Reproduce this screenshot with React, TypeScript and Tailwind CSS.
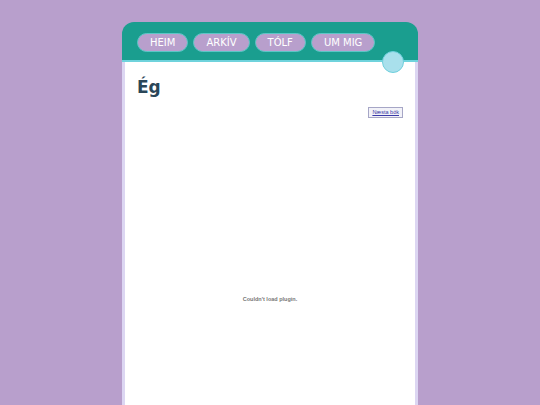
import React from 'react';

const navItems = ['HEIM', 'ARKÍV', 'TÓLF', 'UM MIG'];

export default function App() {
  return (
    <div className="min-h-[405px] h-[405px] overflow-hidden bg-[#b89fcc] pt-[22px] font-['DejaVu_Sans',Verdana,sans-serif]">
      <div className="mx-auto w-[296px]">
        {/* Header */}
        <div className="relative h-[40px] rounded-t-[12px] bg-[#1a9e8f] border-b-2 border-[#6fd3dc] pl-[15px] pt-[11px]">
          <nav className="flex gap-[5px]">
            {navItems.map((item) => (
              <span
                key={item}
                className="h-[19px] flex items-center rounded-full bg-[#b89fcc] border border-[#5cc6c6] px-[12px] text-[10px] leading-none text-white"
              >
                {item}
              </span>
            ))}
          </nav>
          <div className="absolute right-[14px] top-[29px] h-[22px] w-[22px] rounded-full bg-[#a9e0ec] border border-[#6fcfdc]" />
        </div>

        {/* Body */}
        <div className="h-[400px] bg-white border-x-[3px] border-[#dcd6f2] px-[12px] pt-[17px]">
          <h1 className="text-[17px] font-bold leading-none text-[#2a4658]">Ég</h1>
          <div className="mt-[11px] flex justify-end">
            <span className="h-[11px] flex items-center border border-[#a6a6c6] bg-[#f2f2f8] px-[3px] text-[5.5px] leading-none text-[#3a3aa8] underline font-['Liberation_Sans',Arial,sans-serif]">
              Næsta bók
            </span>
          </div>
          <div className="mt-[177px] text-center text-[5.5px] font-bold text-[#777] font-['Liberation_Sans',Arial,sans-serif]">
            Couldn't load plugin.
          </div>
        </div>
      </div>
    </div>
  );
}
